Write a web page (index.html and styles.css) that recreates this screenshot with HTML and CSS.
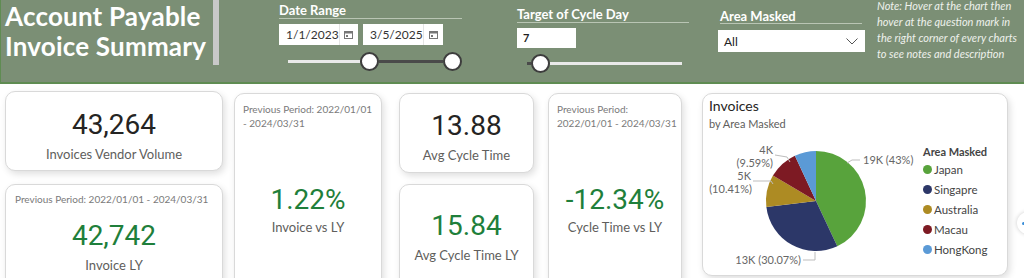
FILE: index.html
```html
<!DOCTYPE html>
<html lang="en">
<head>
    <meta charset="UTF-8">
    <meta name="viewport" content="width=device-width, initial-scale=1.0">
    <title>Account Payable Invoice Summary</title>
    <link rel="stylesheet" href="styles.css">
</head>
<body>
    <div class="header">
        <div class="title-block">
            <h1 class="title">Account Payable<br>Invoice Summary</h1>
            <div class="title-bar"></div>
        </div>

        <div class="slicer date-range">
            <div class="slicer-label">Date Range</div>
            <div class="date-inputs">
                <div class="date-box box-start">
                    <span class="date-text">1/1/2023</span>
                    <span class="cal">
                        <svg width="9" height="9" viewBox="0 0 9 9"><rect x="0.5" y="1.5" width="8" height="7" fill="none" stroke="#777"/><rect x="0.5" y="1.5" width="8" height="2" fill="#777"/><rect x="2" y="5" width="2" height="2" fill="#777"/></svg>
                    </span>
                </div>
                <div class="date-box box-end">
                    <span class="date-text">3/5/2025</span>
                    <span class="cal">
                        <svg width="9" height="9" viewBox="0 0 9 9"><rect x="0.5" y="1.5" width="8" height="7" fill="none" stroke="#777"/><rect x="0.5" y="1.5" width="8" height="2" fill="#777"/><rect x="2" y="5" width="2" height="2" fill="#777"/></svg>
                    </span>
                </div>
            </div>
            <div class="range range-date">
                <span class="seg seg-light seg-date-left"></span>
                <span class="thumb"></span>
                <span class="seg seg-dark seg-date-mid"></span>
                <span class="thumb"></span>
            </div>
        </div>

        <div class="slicer target">
            <div class="slicer-label">Target of Cycle Day</div>
            <div class="target-box">7</div>
            <div class="range range-target">
                <span class="seg seg-dark seg-target-left"></span>
                <span class="thumb"></span>
                <span class="seg seg-light seg-target-right"></span>
            </div>
        </div>

        <div class="slicer area">
            <div class="slicer-label area-label">Area Masked</div>
            <div class="dropdown">
                <span>All</span>
                <svg width="12" height="7" viewBox="0 0 12 7"><polyline points="0.5,0.5 6,6 11.5,0.5" fill="none" stroke="#555" stroke-width="1"/></svg>
            </div>
        </div>

        <div class="note">
            Note: Hover at the chart then<br>
            hover at the question mark in<br>
            the right corner of every charts<br>
            to see notes and description
        </div>
    </div>

    <div class="cards">
        <div class="col col-1">
            <div class="card card-small card-volume">
                <div class="kpi">43,264</div>
                <div class="kpi-label">Invoices Vendor Volume</div>
            </div>
            <div class="card card-low card-invoice-ly">
                <div class="prev">Previous Period: 2022/01/01 - 2024/03/31</div>
                <div class="kpi green kpi-ly">42,742</div>
                <div class="kpi-label">Invoice LY</div>
            </div>
        </div>

        <div class="col col-2">
            <div class="card card-tall">
                <div class="prev">Previous Period: 2022/01/01<br>- 2024/03/31</div>
                <div class="kpi green kpi-pct">1.22%</div>
                <div class="kpi-label label-pct">Invoice vs LY</div>
            </div>
        </div>

        <div class="col col-3">
            <div class="card card-small card-cycle">
                <div class="kpi">13.88</div>
                <div class="kpi-label">Avg Cycle Time</div>
            </div>
            <div class="card card-low card-cycle-ly">
                <div class="kpi green">15.84</div>
                <div class="kpi-label">Avg Cycle Time LY</div>
            </div>
        </div>

        <div class="col col-4">
            <div class="card card-tall">
                <div class="prev">Previous Period:<br>2022/01/01 - 2024/03/31</div>
                <div class="kpi green kpi-pct">-12.34%</div>
                <div class="kpi-label label-pct">Cycle Time vs LY</div>
            </div>
        </div>

        <div class="col col-5">
            <div class="card chart-card">
                <div class="chart-title">Invoices</div>
                <div class="chart-sub">by Area Masked</div>
                <div class="chart-body">
                    <svg class="pie" width="210" height="132" viewBox="0 0 210 132">
                        <g transform="translate(-1,0)">
                            <path d="M108,63 L108,13 A50,50 0 0 1 129.29,108.24 Z" fill="#58a33c"/>
                            <path d="M108,63 L129.29,108.24 A50,50 0 0 1 58.37,69.05 Z" fill="#2c3768"/>
                            <path d="M108,63 L58.37,69.05 A50,50 0 0 1 64.93,37.6 Z" fill="#ad8b23"/>
                            <path d="M108,63 L64.93,37.6 A50,50 0 0 1 86.91,17.67 Z" fill="#7d1a23"/>
                            <path d="M108,63 L86.91,17.67 A50,50 0 0 1 108,13 Z" fill="#5b9ad6"/>
                            <g fill="none" stroke="#bdbdbd" stroke-width="1">
                                <polyline points="139,25 144,22 152,22"/>
                                <polyline points="67,17 79,19 82,24"/>
                                <polyline points="45,43 63,43 65,46"/>
                                <polyline points="95,122 107,122 107,114"/>
                            </g>
                            <g class="pie-label">
                                <text x="155" y="26">19K (43%)</text>
                                <text x="65" y="16" text-anchor="end">4K</text>
                                <text x="65" y="29" text-anchor="end">(9.59%)</text>
                                <text x="43" y="42" text-anchor="end">5K</text>
                                <text x="44" y="55" text-anchor="end">(10.41%)</text>
                                <text x="93" y="126" text-anchor="end">13K (30.07%)</text>
                            </g>
                        </g>
                    </svg>
                    <div class="legend">
                        <div class="legend-title">Area Masked</div>
                        <div class="legend-item"><span class="dot" style="background:#58a33c"></span>Japan</div>
                        <div class="legend-item"><span class="dot" style="background:#2c3768"></span>Singapre</div>
                        <div class="legend-item"><span class="dot" style="background:#ad8b23"></span>Australia</div>
                        <div class="legend-item"><span class="dot" style="background:#7d1a23"></span>Macau</div>
                        <div class="legend-item"><span class="dot" style="background:#5b9ad6"></span>HongKong</div>
                    </div>
                </div>
            </div>
        </div>
    </div>

    <div class="page-nav"><span class="page-nav-dot"></span></div>
</body>
</html>
```

FILE: styles.css
```css
body {
    margin: 0;
    font-family: Lato, "Open Sans", sans-serif;
    background-color: #fff;
    width: 1024px;
    height: 278px;
    overflow: hidden;
    position: relative;
}

/* header band */
.header {
    display: flex;
    height: 82px;
    background-color: #7b8f75;
    border-bottom: 2px solid #5f8c52;
    border-left: 1px solid #5f8c52;
    color: #fff;
}
.title-block {
    display: flex;
    width: 218px;
}
.title {
    margin: 1px 0 0 4px;
    width: 208px;
    font-size: 26px;
    font-weight: 700;
    line-height: 30px;
    letter-spacing: 0.2px;
    white-space: nowrap;
}
.title-bar {
    width: 6px;
    height: 65px;
    background-color: #c9c9c9;
}

.slicer {
    display: flex;
    flex-direction: column;
}
.slicer-label {
    font-size: 13px;
    font-weight: 700;
    line-height: 16px;
    border-bottom: 1px solid #b9c5b4;
}

.date-range {
    margin-left: 60px;
    width: 183px;
    padding-top: 2px;
}
.date-inputs {
    display: flex;
    gap: 5px;
    margin-top: 5px;
}
.date-box {
    display: flex;
    align-items: center;
    justify-content: space-between;
    height: 21px;
    background-color: #fff;
    color: #333;
    font-size: 12px;
}
.box-start { width: 79px; }
.box-end { width: 80px; }
.date-text { padding-left: 7px; }
.cal {
    display: flex;
    align-items: center;
    justify-content: center;
    width: 19px;
    height: 100%;
    border-left: 1px solid #e4e4e4;
}

.range {
    display: flex;
    align-items: center;
    height: 19px;
}
.seg { height: 3px; }
.seg-light { background-color: #e9e9e9; }
.seg-dark { background-color: #4a4a4a; }
.thumb {
    width: 15px;
    height: 15px;
    border: 2px solid #3d3d3d;
    border-radius: 50%;
    background-color: #fff;
    flex-shrink: 0;
}
.range-date {
    margin: 7px 0 0 9px;
}
.seg-date-left { width: 74px; }
.seg-date-mid { width: 66px; }

.target {
    margin-left: 55px;
    width: 172px;
    padding-top: 6px;
}
.target-box {
    width: 53px;
    height: 20px;
    margin-top: 5px;
    padding-left: 6px;
    background-color: #fff;
    color: #222;
    font-size: 11px;
    font-weight: 700;
    line-height: 20px;
}
.range-target {
    margin: 6px 0 0 10px;
}
.seg-target-left { width: 4px; }
.seg-target-right { width: 132px; }

.area {
    margin-left: 29px;
    width: 147px;
    padding-top: 9px;
}
.area-label {
    margin: 0 3px 0 2px;
    line-height: 14px;
}
.dropdown {
    display: flex;
    align-items: center;
    justify-content: space-between;
    height: 22px;
    margin-top: 6px;
    padding: 0 7px 0 6px;
    background-color: #fff;
    color: #222;
    font-size: 12px;
}

.note {
    margin: -2px 0 0 12px;
    font-size: 11px;
    font-style: italic;
    line-height: 16px;
    color: #eef1ec;
    white-space: nowrap;
}

/* kpi cards */
.cards {
    display: flex;
    align-items: flex-start;
}
.col {
    display: flex;
    flex-direction: column;
    margin-top: 9px;
}
.col-1 { margin: 7px 0 0 5px; width: 218px; }
.col-2 { margin-left: 11px; width: 148px; }
.col-3 { margin-left: 17px; width: 135px; }
.col-4 { margin-left: 14px; width: 134px; }
.col-5 { margin-left: 20px; width: 306px; }

.card {
    box-sizing: border-box;
    background-color: #fff;
    border: 1px solid #d9d9d9;
    border-radius: 10px;
    box-shadow: 2px 3px 7px rgba(0, 0, 0, 0.13);
    text-align: center;
}
.card-small {
    height: 80px;
    padding-top: 16px;
}
.card-volume { padding-top: 17px; }
.card-low {
    height: 110px;
    margin-top: 13px;
}
.card-cycle-ly {
    margin-top: 11px;
    padding-top: 25px;
}
.card-invoice-ly {
    padding: 7px 0 0 9px;
}
.card-tall {
    height: 200px;
    padding: 8px 0 0 8px;
}

.kpi {
    font-family: Roboto, sans-serif;
    font-size: 28px;
    line-height: 32px;
    color: #252423;
}
.green { color: #1f7f3b; }
.kpi-ly { margin: 14px 9px 0 0; }
.kpi-pct { margin: 54px 8px 0 0; }
.kpi-label {
    margin-top: 4px;
    font-size: 13px;
    line-height: 18px;
    color: #605e5c;
}
.card-invoice-ly .kpi-label { margin-right: 9px; }
.label-pct { margin: 2px 8px 0 0; }

.prev {
    text-align: left;
    font-size: 10px;
    line-height: 14px;
    color: #7a7a7a;
    white-space: nowrap;
}

/* chart */
.chart-card {
    height: 183px;
    padding: 3px 0 0 6px;
    text-align: left;
}
.chart-title {
    font-size: 14px;
    line-height: 17px;
    color: #252423;
}
.chart-sub {
    margin-top: 3px;
    font-size: 11px;
    line-height: 14px;
    color: #605e5c;
}
.chart-body {
    display: flex;
    margin-top: 7px;
}
.pie { display: block; }
.pie-label text {
    font-family: Lato, sans-serif;
    font-size: 11px;
    fill: #666;
}
.legend {
    margin: 7px 0 0 4px;
}
.legend-title {
    font-size: 11px;
    font-weight: 700;
    line-height: 14px;
    color: #444;
}
.legend-item {
    display: flex;
    align-items: center;
    height: 20px;
    font-size: 11.5px;
    color: #444;
}
.legend-item:first-of-type { margin-top: 1px; }
.dot {
    width: 9px;
    height: 9px;
    border-radius: 50%;
    margin-right: 2px;
}

.page-nav {
    position: absolute;
    left: 1017px;
    top: 212px;
    width: 22px;
    height: 22px;
    border-radius: 50%;
    background-color: #fff;
    box-shadow: 0 0 4px rgba(0, 0, 0, 0.2);
}
.page-nav-dot {
    position: absolute;
    left: 5px;
    top: 10px;
    width: 3px;
    height: 3px;
    border-radius: 50%;
    background-color: #3b8ed8;
}
```
